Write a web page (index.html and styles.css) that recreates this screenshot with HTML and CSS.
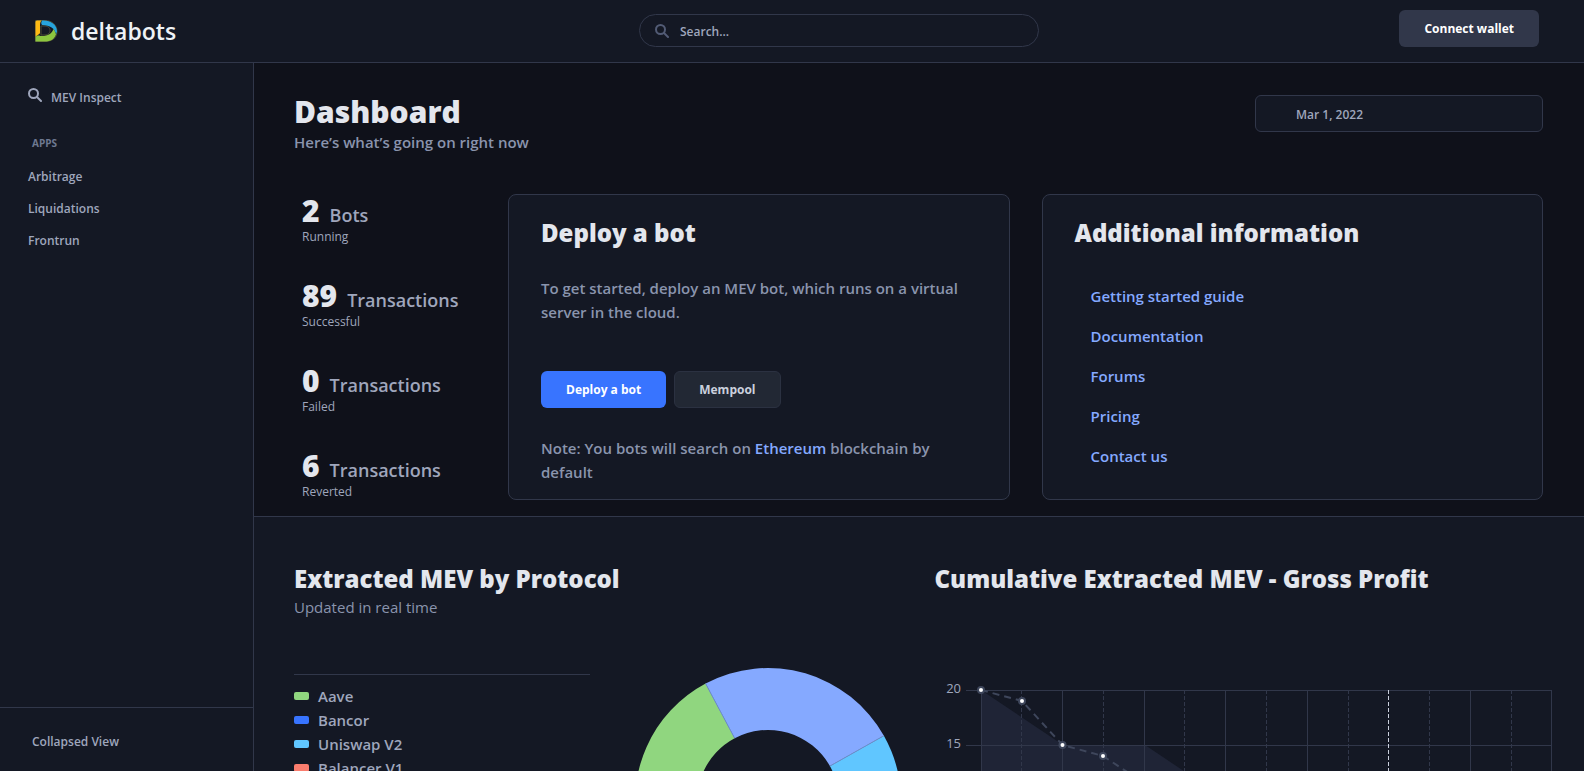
FILE: index.html
```html
<!DOCTYPE html>
<html lang="en">
<head>
<meta charset="utf-8">
<title>deltabots</title>
<link rel="stylesheet" href="styles.css">
</head>
<body>
<header class="topbar">
  <a class="brand" href="#">
    <svg class="brand-mark" viewBox="0 0 24 24" aria-hidden="true">
      <path d="M1.500 1.500H11C18 1.500 23 6 23 12.500S18 22.500 11 22.500H1.500zM7 7v9h3c3 0 6-1 6-4.500S13 7 10 7z" fill="none" stroke="#4a4a35"/>
      <path d="M1.500 3Q1.500 1.500 3 1.500H7.500C6 3 6 5 6 8V14C5.500 15.500 3 16 1.500 18z" fill="#fdb913"/>
      <path d="M8 1.500C16 .8 23 5 23 12.500L22 15.500C21 9.500 16 6 8 6C7 5 7 3 8 1.500z" fill="#27a4dd"/>
      <path d="M1.500 18C4 15.500 5 17 8 17C14 17 18 14.500 19.500 10C21 12 21.500 14 22 15.500C20.500 20 17 22.500 11 22.500H1.500z" fill="#8cc63f"/>
    </svg>
    <span>deltabots</span>
  </a>
  <label class="search">
    <svg class="icon" viewBox="0 0 14 14" aria-hidden="true"><circle cx="5.500" cy="5.500" r="4.500"/><path d="M9 9l4 4"/></svg>
    <input type="search" placeholder="Search..." aria-label="Search">
  </label>
  <button class="btn btn-wallet" type="button">Connect wallet</button>
</header>
<div class="shell">
  <aside class="sidebar">
    <nav class="nav">
      <a class="nav-link nav-main" href="#">
        <svg class="icon" viewBox="0 0 14 14" aria-hidden="true"><circle cx="5.500" cy="5.500" r="4.500"/><path d="M9 9l4 4"/></svg>
        <span>MEV Inspect</span>
      </a>
      <h2 class="nav-title">APPS</h2>
      <a class="nav-link" href="#">Arbitrage</a>
      <a class="nav-link" href="#">Liquidations</a>
      <a class="nav-link" href="#">Frontrun</a>
    </nav>
    <button class="collapse" type="button">Collapsed View</button>
  </aside>
  <main class="main">
    <section class="hero">
      <div class="hero-head">
        <div>
          <h1>Dashboard</h1>
          <p class="lead">Here’s what’s going on right now</p>
        </div>
        <input class="date" type="text" value="Mar 1, 2022" aria-label="Date">
      </div>
      <div class="hero-grid">
        <ul class="stats">
          <li><p class="stat"><strong>2</strong><span>Bots</span></p><p class="stat-note">Running</p></li>
          <li><p class="stat"><strong>89</strong><span>Transactions</span></p><p class="stat-note">Successful</p></li>
          <li><p class="stat"><strong>0</strong><span>Transactions</span></p><p class="stat-note">Failed</p></li>
          <li><p class="stat"><strong>6</strong><span>Transactions</span></p><p class="stat-note">Reverted</p></li>
        </ul>
        <article class="card">
          <h2>Deploy a bot</h2>
          <p class="card-text">To get started, deploy an MEV bot, which runs on a virtual server in the cloud.</p>
          <div class="actions">
            <button class="btn btn-primary" type="button">Deploy a bot</button>
            <button class="btn btn-muted" type="button">Mempool</button>
          </div>
          <p class="card-text">Note: You bots will search on <a href="#">Ethereum</a> blockchain by default</p>
        </article>
        <article class="card">
          <h2>Additional information</h2>
          <ul class="links">
            <li><a href="#">Getting started guide</a></li>
            <li><a href="#">Documentation</a></li>
            <li><a href="#">Forums</a></li>
            <li><a href="#">Pricing</a></li>
            <li><a href="#">Contact us</a></li>
          </ul>
        </article>
      </div>
    </section>
    <section class="reports">
      <div class="report">
        <h2>Extracted MEV by Protocol</h2>
        <p class="report-note">Updated in real time</p>
        <div class="protocols">
          <ul class="legend">
            <li><i class="swatch green"></i>Aave</li>
            <li><i class="swatch blue"></i>Bancor</li>
            <li><i class="swatch sky"></i>Uniswap V2</li>
            <li><i class="swatch coral"></i>Balancer V1</li>
          </ul>
          <svg class="donut" viewBox="-133 -133 266 266" role="img" aria-label="Extracted MEV by protocol">
            <path fill="#90d67f" d="M0 133A133 133 0 0 1-62.400-117.400L-33.300-62.700A71 71 0 0 0 0 71z"/>
            <path fill="#85a9ff" d="M-62.400-117.400A133 133 0 0 1 115.900-65.300L61.900-34.900A71 71 0 0 0-33.300-62.700z"/>
            <path fill="#60c6ff" d="M115.900-65.300A133 133 0 0 1 0 133L0 71A71 71 0 0 0 61.900-34.900z"/>
            <path class="seam" d="M-62.400-117.400L-33.300-62.700M115.900-65.300L61.900-34.900"/>
          </svg>
        </div>
      </div>
      <div class="report">
        <h2>Cumulative Extracted MEV - Gross Profit</h2>
        <svg class="profit" viewBox="0 0 618 260" role="img" aria-label="Gross profit">
          <path class="area" d="M46 10L128 65H210L292 120V260H46z"/>
          <path class="grid" d="M31 10.500H617M31 65.500H617M46.500 10V260M127.500 10V260M209.500 10V260M290.500 10V260M372.500 10V260M535.500 10V260M616.500 10V260"/>
          <path class="grid dashed" d="M86.500 10V260M168.500 10V260M249.500 10V260M331.500 10V260M413.500 10V260M494.500 10V260M576.500 10V260"/>
          <path class="marker" d="M453.500 10V260"/>
          <path class="trend" d="M46 10L87 21L127.500 65L168 76L209 103"/>
          <g class="points"><circle cx="46" cy="10" r="3"/><circle cx="87" cy="21" r="3"/><circle cx="127.500" cy="65" r="3"/><circle cx="168" cy="76" r="3"/></g>
          <text x="26" y="13">20</text>
          <text x="26" y="68">15</text>
        </svg>
      </div>
    </section>
  </main>
</div>
</body>
</html>
```
FILE: styles.css
```css
* { box-sizing: border-box; }
body {
  margin: 0;
  height: 100vh;
  display: flex;
  flex-direction: column;
  overflow: hidden;
  background: #0f111a;
  color: #9fa6bc;
  font: 600 12px/20px "Open Sans", "Noto Sans", sans-serif;
}
h1, h2, p, ul { margin: 0; padding: 0; }
ul { list-style: none; }
a { color: #85a9ff; text-decoration: none; }
button, input { font: inherit; }
h1, h2 { color: #e3e6ed; font-weight: 800; }
h1 { font-size: 30px; line-height: 34px; }
h2 { font-size: 24px; line-height: 32px; }

.icon { width: 14px; height: 14px; fill: none; stroke: currentColor; stroke-width: 2; stroke-linecap: round; flex: none; }

.topbar {
  flex: none;
  height: 63px;
  display: grid;
  grid-template-columns: 1fr 400px 500px;
  align-items: center;
  padding: 0 45px 1px 34px;
  background: #141824;
  border-bottom: 1px solid #31374a;
}
.brand { display: flex; align-items: center; gap: 13px; color: #eff2f6; font-size: 23px; line-height: 32px; }
.brand-mark { width: 24px; height: 24px; }
.search {
  display: flex;
  align-items: center;
  gap: 11px;
  height: 33px;
  padding: 0 15px;
  border: 1px solid #31374a;
  border-radius: 17px;
  color: #525b75;
}
.search input { flex: 1; min-width: 0; padding: 2px 0 0; border: 0; outline: 0; background: none; color: #9fa6bc; }
.search input::placeholder { color: #9fa6bc; opacity: 1; }
.btn { height: 37px; padding: 1px 24px 0; border: 1px solid transparent; border-radius: 6px; font-weight: 700; }
.btn-wallet { align-self: start; justify-self: end; margin-top: 10px; background: #31374a; color: #fff; }
.btn-primary { background: #3874ff; color: #fff; }
.btn-muted { background: #222834; border-color: #2b3141; color: #cbd0dd; }

.shell { flex: 1; min-height: 0; display: flex; }
.sidebar { flex: none; width: 254px; display: flex; flex-direction: column; background: #141824; border-right: 1px solid #31374a; }
.nav { flex: 1; padding: 25px 28px; }
.nav-link { display: block; padding: 6px 0; color: #9fa6bc; }
.nav-main { display: flex; gap: 9px; padding-top: 0; }
.nav-title { margin: 19px 4px 8px; color: #6e7891; font-size: 10px; line-height: 20px; font-weight: 700; }
.collapse { height: 64px; padding: 4px 32px 0; border: 0; border-top: 1px solid #31374a; background: none; color: #9fa6bc; text-align: left; }

.main { flex: 1; min-width: 0; overflow: hidden; }
.hero { padding: 32px 41px 16px 40px; border-bottom: 1px solid #31374a; }
.hero-head { display: flex; justify-content: space-between; align-items: flex-start; height: 99px; }
.lead { color: #8a94ad; font-size: 15px; line-height: 26px; }
.date { width: 288px; height: 37px; padding: 2px 40px 0; border: 1px solid #31374a; border-radius: 6px; background: #141824; color: #9fa6bc; }
.hero-grid { display: grid; grid-template-columns: 182px 1fr 1fr; column-gap: 32px; }
.stats { display: flex; flex-direction: column; gap: 37px; padding: 3px 0 0 8px; }
.stat { display: flex; align-items: baseline; gap: 10px; font-size: 18px; line-height: 28px; }
.stat strong { color: #e3e6ed; font-size: 30px; font-weight: 800; }
.stat-note { font-size: 12px; line-height: 16px; font-weight: 400; }
.card { min-height: 306px; padding: 22px 32px 0; background: #141824; border: 1px solid #31374a; border-radius: 8px; }
.card .card-text { max-width: 430px; color: #8a94ad; font-size: 15px; line-height: 24px; }
.card h2 + .card-text { margin-top: 27px; }
.actions { display: flex; gap: 8px; margin: 47px 0 28px; }
.links { padding: 27px 16px 0; font-size: 15px; line-height: 40px; }

.reports { display: grid; grid-template-columns: 1fr 1fr; column-gap: 32px; padding: 46px 41px 0 40px; background: #141824; }
.report { min-width: 0; }
.report-note { color: #8a94ad; font-size: 15px; line-height: 24px; font-weight: 400; }
.protocols { display: flex; justify-content: space-between; align-items: flex-start; margin-top: 49px; padding-right: 2px; }
.legend { width: 296px; margin-top: 6px; padding-top: 9px; border-top: 1px solid #31374a; font-size: 15px; line-height: 24px; }
.legend li { display: flex; align-items: center; gap: 9px; }
.swatch { width: 15px; height: 8px; border-radius: 2px; }
.green { background: #90d67f; }
.blue { background: #3874ff; }
.sky { background: #60c6ff; }
.coral { background: #fa7d6e; }
.donut { width: 266px; height: 266px; flex: none; }
.seam { stroke: #6f8fcb; }
.profit { display: block; width: 618px; margin-top: 85px; }
.area { fill: #1f2436; }
.grid { fill: none; stroke: #31374a; }
.dashed { stroke-dasharray: 4 2; }
.marker { stroke: #cbd0dd; stroke-dasharray: 4 2; }
.trend { fill: none; stroke: #3e465b; stroke-width: 2; stroke-dasharray: 7 5; }
.points circle { fill: #fff; stroke: #3e465b; stroke-width: 2; }
.profit text { fill: #9fa6bc; font-size: 13px; font-weight: 400; text-anchor: end; }
```
